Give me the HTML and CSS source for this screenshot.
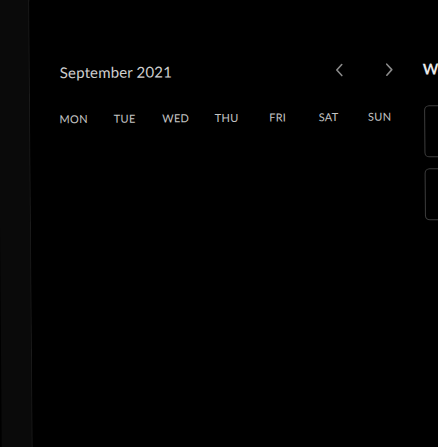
FILE: index.html
```html
<!DOCTYPE html>
<html>
<head>
<meta charset="utf-8">
<link rel="stylesheet" href="styles.css">
</head>
<body>
<div class="stage">
  <aside class="sidebar"></aside>
  <main class="main">
    <section class="calendar">
      <header class="cal-head">
        <h2 class="month">September 2021</h2>
        <div class="nav">
          <button class="nav-btn" aria-label="Previous month">
            <svg width="10" height="14" viewBox="0 0 10 14"><path d="M7 1.5 L2 7 L7 12.5" fill="none" stroke="currentColor" stroke-width="1.6" stroke-linecap="round" stroke-linejoin="round"/></svg>
          </button>
          <button class="nav-btn" aria-label="Next month">
            <svg width="10" height="14" viewBox="0 0 10 14"><path d="M3 1.5 L8 7 L3 12.5" fill="none" stroke="currentColor" stroke-width="1.6" stroke-linecap="round" stroke-linejoin="round"/></svg>
          </button>
        </div>
      </header>
      <div class="weekdays">
        <span>MON</span><span>TUE</span><span>WED</span><span>THU</span><span>FRI</span><span>SAT</span><span>SUN</span>
      </div>
    </section>
    <section class="panel">
      <h3 class="panel-title">Week</h3>
      <div class="card"></div>
      <div class="card"></div>
    </section>
  </main>
</div>
</body>
</html>
```
FILE: styles.css
```css
html, body {
  margin: 0;
  padding: 0;
  background: #000;
  overflow: hidden;
  width: 438px;
  height: 447px;
}
.stage {
  display: flex;
  width: 438px;
  height: 467px;
  margin-top: -10px;
  padding-top: 10px;
  box-sizing: border-box;
  transform: rotate(-0.45deg);
  font-family: "Lato", "Open Sans", sans-serif;
}
.sidebar {
  width: 30px;
  flex: none;
  background: #0a0a0a;
  border-right: 1px solid #1b1b1b;
  margin-top: -20px;
  margin-bottom: -20px;
}
.main {
  flex: 1;
  display: flex;
  padding-left: 30px;
  min-width: 0;
  background: #000;
}
.calendar {
  width: 357px;
  flex: none;
  padding-top: 61px;
}
.cal-head {
  display: flex;
  align-items: center;
  justify-content: space-between;
  height: 20px;
}
.month {
  margin: 0;
  font-size: 15px;
  font-weight: 400;
  color: #cfcfcf;
  letter-spacing: 0.15px;
}
.nav {
  display: flex;
  gap: 39px;
  margin-right: 23px;
}
.nav-btn {
  background: none;
  border: 0;
  padding: 0;
  color: #8a8a8a;
  width: 10px;
  height: 14px;
  display: flex;
}
.weekdays {
  display: grid;
  grid-template-columns: repeat(7, 51px);
  margin-top: 30px;
  margin-left: -12px;
  font-size: 11px;
  color: #c4c4c4;
  text-align: center;
  letter-spacing: 0.3px;
}
.panel {
  padding-top: 60px;
  margin-left: 6px;
  flex: none;
  width: 200px;
}
.panel-title {
  margin: 0 0 27px 0;
  font-size: 15px;
  font-weight: 700;
  color: #e8e8e8;
  height: 20px;
  line-height: 20px;
}
.card {
  height: 50px;
  border: 1px solid #3d3d3d;
  border-radius: 5px;
  margin-left: 1px;
  margin-bottom: 11px;
}
```
